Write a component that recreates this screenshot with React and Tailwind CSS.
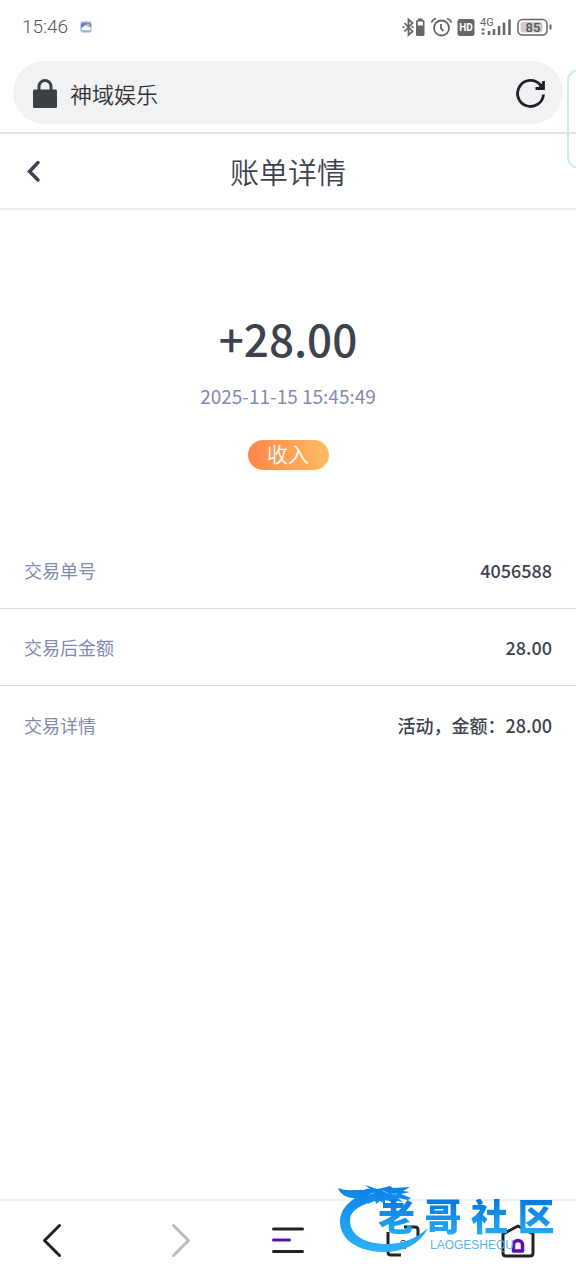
const rows = [
  { label: '交易单号', value: '4056588' },
  { label: '交易后金额', value: '28.00' },
  { label: '交易详情', value: '活动，金额：28.00' },
];

function StatusBar() {
  return (
    <div className="flex h-[53px] items-center justify-between pl-[22px] pr-6 text-[#666]">
      <div className="flex items-center gap-3">
        <span className="font-['Roboto',sans-serif] text-[19px] font-light leading-6 text-[#555]">15:46</span>
        <svg width="12" height="12" viewBox="0 0 12 12" aria-hidden="true">
          <rect width="12" height="12" rx="3" fill="#c3dcfa" />
          <rect x="1" y="1.500" width="10" height="9" rx="2" fill="#5582c8" />
          <circle cx="8" cy="4.500" r="2" fill="#d8b878" />
          <path d="M2 9.500a2 2 0 0 1 1-3.500 2.700 2.700 0 0 1 5 0 2 2 0 0 1 2 3.500z" fill="#fff" />
        </svg>
      </div>

      <svg width="150" height="24" viewBox="402 14 150 24" fill="none" stroke="#666" aria-hidden="true">
        {/* Bluetooth */}
        <path d="M404.500 22l8 8.500-4 3.500V18.500l4 3.500-8 8.500M402.500 26.200h2M411.500 26.200h2" strokeWidth="1.800" />
        <rect x="416" y="19" width="8.500" height="16" rx="1.500" fill="#666" stroke="none" />
        <rect x="418" y="17.500" width="4.500" height="3" fill="#666" stroke="none" />
        <rect x="417.800" y="20.500" width="5" height="4" fill="#fff" stroke="none" />
        {/* Alarm */}
        <circle cx="441.500" cy="27" r="7.500" strokeWidth="1.800" />
        <path d="M441 23v4.500l2.500 2.500M431.500 21.500q1-3 4.500-4M451.500 21.500q-1-3-4.500-4" strokeWidth="1.800" />
        {/* HD */}
        <rect x="457.500" y="18" width="17" height="17" rx="2.500" fill="#666" stroke="none" />
        <text x="466" y="30" textAnchor="middle" fontSize="10" fontWeight="700" fontFamily="Roboto, sans-serif" fill="#fff" stroke="none">HD</text>
        {/* Signal */}
        <text x="480" y="25" fontSize="11" fontFamily="Roboto, sans-serif" fill="#666" stroke="none">4G</text>
        <path d="M481.500 28.500h3M481.500 32.500h3" strokeWidth="2" />
        <path d="M489 30v4M494 28v6M499 25v9M504 21.500v12.500M509.500 18.500v15.500" strokeWidth="2.500" />
        {/* Battery */}
        <rect x="518" y="18.500" width="29" height="15.500" rx="4.500" strokeWidth="1.500" />
        <rect x="520.500" y="21" width="22" height="10.500" rx="2" fill="#ccc" stroke="none" />
        <path d="M550.500 23.500v5" strokeWidth="2" />
        <text x="533" y="31" textAnchor="middle" fontSize="13" fontWeight="500" fontFamily="Roboto, sans-serif" fill="#555" stroke="none">85</text>
      </svg>
    </div>
  );
}

function AddressBar() {
  return (
    <div className="border-b-2 border-[#e3e3e5] px-[13px] py-2">
      <div className="flex h-[63px] items-center rounded-full bg-[#f0f2f4] pl-5 pr-4">
        <svg width="24" height="30" viewBox="0 0 24 30" aria-hidden="true">
          <path d="M6 13V8.500a6 6 0 0 1 12 0V13" fill="none" stroke="#3c4043" strokeWidth="3" />
          <rect y="11.500" width="24" height="18.500" rx="1.500" fill="#3c4043" />
        </svg>
        <input
          type="text"
          aria-label="地址"
          defaultValue="神域娱乐"
          className="ml-[13px] min-w-0 flex-1 bg-transparent text-[22px] font-[350] leading-8 text-[#333] outline-none"
        />
        <button type="button" aria-label="刷新">
          <svg width="32" height="32" viewBox="0 0 32 32" fill="none" stroke="#202124" strokeWidth="2.800" aria-hidden="true">
            <path d="M28.500 17.500A13 13 0 1 1 25 7.500l3 3" />
            <path d="M28.500 4v7.500H20.500" />
            <path d="M22 11.500h6.500V5z" fill="#202124" stroke="none" />
          </svg>
        </button>
      </div>
    </div>
  );
}

function BottomNav() {
  const button = 'flex h-full items-center justify-center';
  return (
    <nav className="relative grid h-[81px] grid-cols-5 border-t-2 border-[#f0f0f0]">
      <button type="button" aria-label="后退" className={button}>
        <svg width="48" height="36" viewBox="0 0 48 36" fill="none" stroke="#222" strokeWidth="3" strokeLinecap="round" strokeLinejoin="round">
          <path d="M25.500 2.500L10.500 17.500l15 15" />
        </svg>
      </button>
      <button type="button" aria-label="前进" className={button}>
        <svg width="48" height="36" viewBox="0 0 48 36" fill="none" stroke="#bbb" strokeWidth="3" strokeLinecap="round" strokeLinejoin="round">
          <path d="M24.500 2.500l15 15-15 15" />
        </svg>
      </button>
      <button type="button" aria-label="菜单" className={button}>
        <svg width="34" height="30" viewBox="0 0 34 30" fill="none" strokeWidth="3" strokeLinecap="round">
          <path d="M2.500 3h29M2.500 25.500h29" stroke="#222" />
          <path d="M2.500 14h16" stroke="#5b0fb5" />
        </svg>
      </button>
      <button type="button" aria-label="标签页" className={button}>
        <svg width="34" height="32" viewBox="0 0 34 32" fill="none" stroke="#222" strokeWidth="3">
          <path d="M18 2h11q3 0 3 3v8M2 7v20q0 3 3 3h10" />
          <text x="17" y="24" textAnchor="middle" fontSize="12" fontWeight="300" fontFamily="Roboto, sans-serif" fill="#222" stroke="none">2</text>
        </svg>
      </button>
      <button type="button" aria-label="主页" className={button}>
        <svg width="34" height="34" viewBox="0 0 34 34" fill="none" strokeWidth="3" strokeLinejoin="round">
          <path d="M17 2L2 10v19q0 3 3 3h24q3 0 3-3V10z" stroke="#222" />
          <path d="M12.500 27v-6a4.500 4.500 0 0 1 9 0v6z" stroke="#5b0fb5" strokeWidth="3.500" />
        </svg>
      </button>

      <CommunityLogo />
    </nav>
  );
}

function CommunityLogo() {
  return (
    <div className="pointer-events-none absolute -top-5 right-4 h-20 w-[224px]">
      <svg className="absolute inset-0" width="112" height="80" viewBox="0 0 112 80" aria-hidden="true">
        <defs>
          <linearGradient id="dragon" x1="0" y1="0" x2="0" y2="80" gradientUnits="userSpaceOnUse">
            <stop offset="0.1" stopColor="#0b84ea" />
            <stop offset="0.85" stopColor="#2cb0fa" />
          </linearGradient>
        </defs>
        <g fill="url(#dragon)">
          {/* Body */}
          <path d="M32 12C14 17 4 28 4 41c0 18 19 30 44 30 20 0 36-8 44-24-11 10-25 16-41 16-22 0-37-9-37-23 0-11 11-17 30-21z" />
          {/* Head and whiskers */}
          <path d="M2 7q8 3 15 2l11 0q3-2 6-1l-5-4 12 4 5-1 8-2 3 2 17-1-7 4 7 1-9 2 10 4-3 2-10-2 5 4-7-1-3-1 2 3-6-2-4-1 0 4-5-3-4 3-1-4-7 4 0-3-11 3 5-6q-5 2-9 0-7 0-13-6z" />
        </g>
        <path d="M34 13l4-1M47 10l5 2M56 13l5 0" stroke="#6fc0ff" strokeLinecap="round" />
      </svg>
      <div className="absolute left-[42px] top-[18px] grid w-[186px] grid-cols-4 bg-gradient-to-b from-[#0878df] to-[#28b1fa] bg-clip-text pb-2 text-[37px] font-black leading-8 text-transparent">
        <span>老</span>
        <span>哥</span>
        <span>社</span>
        <span>区</span>
      </div>
      <div className="absolute left-[94px] top-[58px] font-['Liberation_Sans',sans-serif] text-xs leading-3 text-[#5bb5ee]">
        LAOGESHEQU
      </div>
    </div>
  );
}

export default function App() {
  return (
    <div className="relative flex min-h-screen flex-col overflow-hidden bg-white font-['Noto_Sans_CJK_SC',sans-serif] text-[#3d424f]">
      <StatusBar />
      <AddressBar />

      <header className="grid h-[76px] grid-cols-[72px_1fr_72px] items-center border-b-2 border-[#ededee]">
        <button type="button" aria-label="返回" className="flex h-full items-center pl-[26px]">
          <svg width="16" height="24" viewBox="0 0 16 24" fill="none" stroke="#3d424f" strokeWidth="3.500" strokeLinecap="round" aria-hidden="true">
            <path d="M12 3.500L3.500 12.500l8.500 8.500" />
          </svg>
        </button>
        <h1 className="text-center text-[29px] font-[350] leading-10">账单详情</h1>
      </header>

      <main className="flex-1">
        <section className="flex flex-col items-center pb-[62px] pt-[100px]">
          <p className="text-[44px] font-medium leading-[56px]">+28.00</p>
          <time className="mt-[18px] text-[19px] leading-6 text-[#7f8bb0]">2025-11-15 15:45:49</time>
          <span className="mt-8 flex h-[30px] w-[81px] items-center justify-center rounded-full bg-gradient-to-r from-[#ff8548] to-[#ffbc62] pb-1 text-[21px] font-[350] leading-6 text-white">
            收入
          </span>
        </section>

        <dl className="text-[18px] leading-6">
          {rows.map((row) => (
            <div key={row.label} className="flex h-[77px] items-center justify-between border-b border-[#d9d9dc] px-6 last:border-b-0">
              <dt className="text-[#7f8bb0]">{row.label}</dt>
              <dd className="font-medium">{row.value}</dd>
            </div>
          ))}
        </dl>
      </main>

      <BottomNav />

      {/* Edge panel handle */}
      <div className="absolute -right-4 top-[69px] h-[100px] w-[25px] rounded-xl border-2 border-[#c5eeec]" />
    </div>
  );
}
